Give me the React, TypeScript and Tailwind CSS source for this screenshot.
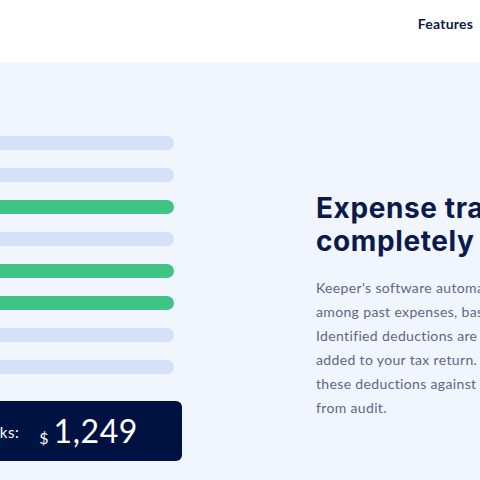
import React from 'react';

// bar pattern, top to bottom: true = green (matched deduction)
const bars = [false, false, true, false, true, true, false, false];

export default function App() {
    return (
        <div
            className="w-[480px] h-[480px] overflow-hidden bg-[#f0f5fe]"
            style={{ fontFamily: 'Lato, "Open Sans", sans-serif' }}
        >
            {/* Top nav */}
            <header className="h-[62px] bg-white flex items-start justify-end pr-[7px] pt-[14px]">
                <span className="text-[14px] font-bold text-[#0b1a4b] leading-[20px] tracking-[0.2px]">Features</span>
            </header>

            <main className="flex">
                {/* Left: expense bars + total badge */}
                <div className="w-[182px] shrink-0 flex justify-end overflow-hidden">
                    <div className="w-[300px] shrink-0 flex flex-col items-end pt-[74px]">
                        <div className="w-[300px] pr-[8px] flex flex-col gap-[18px]">
                            {bars.map((green, i) => (
                                <div
                                    key={i}
                                    className={`h-[14px] rounded-full ${green ? 'bg-[#3dc585]' : 'bg-[#d5e0f9]'}`}
                                />
                            ))}
                        </div>
                        <div className="mt-[27px] w-[300px] h-[60px] bg-[#001241] rounded-[6px] flex items-center justify-end pr-[44px] text-white whitespace-nowrap">
                            <span className="text-[15px] mr-[20px] mt-[2px] tracking-[0.5px]">Found in 3 weeks:</span>
                            <span className="text-[16px] mr-[5px] mt-[14px]">$</span>
                            <span className="text-[32px] leading-none tracking-[0.6px]">1,249</span>
                        </div>
                    </div>
                </div>

                {/* Right: copy */}
                <div className="w-[420px] shrink-0 ml-[134px] pt-[130px] whitespace-nowrap">
                    <h2
                        className="text-[28px] leading-[33px] font-bold text-[#0b1a4b] tracking-[0.6px]"
                        style={{ fontFamily: 'Inter, Lato, sans-serif' }}
                    >
                        Expense tracking,
                        <br />
                        completely automated
                    </h2>
                    <p className="mt-[18px] text-[14px] leading-[24px] text-[#5f6782] tracking-[0.35px]">
                        Keeper's software automatically finds tax deductions
                        <br />
                        among past expenses, based on your job and location.
                        <br />
                        Identified deductions are reviewed by tax pros, then
                        <br />
                        added to your tax return. Our team double-checks
                        <br />
                        these deductions against IRS rules to protect you
                        <br />
                        from audit.
                    </p>
                </div>
            </main>
        </div>
    );
}
